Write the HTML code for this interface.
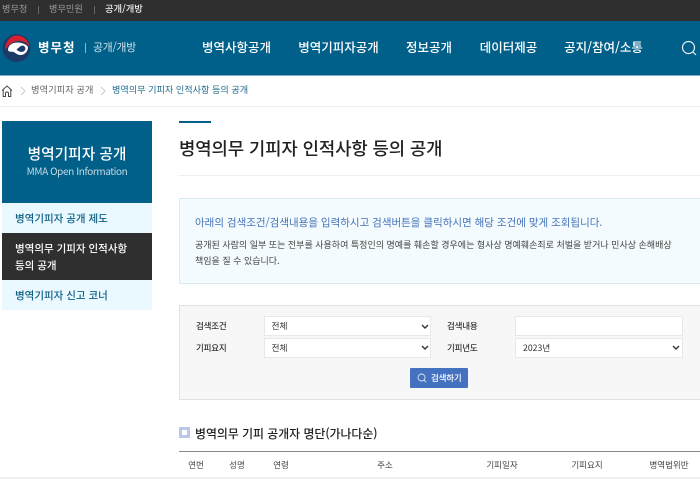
<!DOCTYPE html>
<html lang="ko">
<head>
<meta charset="utf-8">
<title>병역의무 기피자 인적사항 등의 공개</title>
<style>
html,body{margin:0;padding:0;background:#fff}
body{width:700px;height:479px;position:relative;overflow:hidden;font-family:"Noto Sans CJK KR","Liberation Sans",sans-serif;color:#333}
.a{position:absolute;white-space:nowrap;line-height:1}
.b{position:absolute}
.nav{color:#fff;font-size:12.5px;font-weight:500;top:41px;transform:translateX(-50%)}
.sel{position:absolute;background:#fff;border:1px solid #e8e8e8;box-sizing:border-box;height:20px}
.lbl{font-size:8.5px;font-weight:500;color:#333;letter-spacing:-.2px}
.val{font-size:8.7px;color:#333}
.th{font-size:8.5px;color:#444;top:461px;transform:translateX(-50%)}
</style>
</head>
<body>
<div class="b" style="left:0;top:0;width:700px;height:21px;background:#2f2f2f"></div>
<div class="a" style="left:2px;top:4px;font-size:9.2px;color:#999">병무청</div>
<div class="b" style="left:38px;top:6px;width:1px;height:8px;background:#666"></div>
<div class="a" style="left:49px;top:4px;font-size:9.2px;color:#999">병무민원</div>
<div class="b" style="left:94px;top:6px;width:1px;height:8px;background:#666"></div>
<div class="a" style="left:105px;top:4px;font-size:9.3px;font-weight:500;color:#eee">공개/개방</div>

<div class="b" style="left:0;top:21px;width:700px;height:54px;background:#006089;border-bottom:1px solid #7fafc4"></div>
<svg class="b" style="left:0;top:30px" width="36" height="36" viewBox="0 0 36 36">
<circle cx="16.500" cy="18" r="14" fill="#1b3a68"/>
<path d="M5.500 20C4.500 12 10.500 5.500 17 5.500 23.500 5.500 29 10.500 29.500 17 27.500 12.500 23 11 18.500 11 13 11 8 14.500 5.500 20Z" fill="#d5202f"/>
<path d="M8 20C8 15 13 12 18.500 12.500 23.500 13 27 15 28 17 28 22 24 25.500 19.500 25 16 24.500 15 22 12.500 21.800 10.500 21.600 8.500 22 8 20Z" fill="#fff"/>
<path d="M19 17.500C20.500 15.500 23 15 24.500 16.500 26 18 25.500 20.500 23.500 21.500 21.500 22.500 18.500 21.500 17 20 16 19 17.500 19 19 17.500Z" fill="#1b3a68"/>
</svg>
<div class="a" style="left:38px;top:41px;font-size:12.500px;font-weight:700;color:#fff;letter-spacing:1px">병무청</div>
<div class="b" style="left:85px;top:43px;width:1px;height:10px;background:#8fb8ca"></div>
<div class="a" style="left:93px;top:42px;font-size:10.800px;color:#cfe2ea;letter-spacing:-.2px">공개/개방</div>
<div class="a nav" style="left:236.500px">병역사항공개</div>
<div class="a nav" style="left:338.500px">병역기피자공개</div>
<div class="a nav" style="left:429px">정보공개</div>
<div class="a nav" style="left:508.500px">데이터제공</div>
<div class="a nav" style="left:603.500px">공지/참여/소통</div>
<svg class="b" style="left:681px;top:40px" width="16" height="16" viewBox="0 0 16 16" fill="none" stroke="#e6f0f4" stroke-width="1.200"><circle cx="7.500" cy="7.500" r="6"/><path d="M12 12l3 3"/></svg>

<svg class="b" style="left:1px;top:84px" width="12" height="14" viewBox="0 0 12 14" fill="none" stroke="#444" stroke-width="1"><path d="M1 6.500L6 2l5 4.500M2.200 5.500V12.500H4.500V9.500A1.500 1.500 0 0 1 7.500 9.500V12.500H9.800V5.500"/></svg>
<svg class="b" style="left:20px;top:86px" width="6" height="10" viewBox="0 0 6 10" fill="none" stroke="#ccc"><path d="M1 1l4 4-4 4"/></svg>
<div class="a" style="left:31px;top:85px;font-size:9.300px;color:#666">병역기피자 공개</div>
<svg class="b" style="left:100px;top:86px" width="6" height="10" viewBox="0 0 6 10" fill="none" stroke="#ccc"><path d="M1 1l4 4-4 4"/></svg>
<div class="a" style="left:112px;top:85px;font-size:9.150px;color:#1d6a8c">병역의무 기피자 인적사항 등의 공개</div>
<div class="b" style="left:0;top:106px;width:700px;height:1px;background:#eee"></div>

<div class="b" style="left:2px;top:121px;width:150px;height:82px;background:#006089"></div>
<div class="a" style="left:77px;top:147px;font-size:14.700px;font-weight:500;color:#fff;transform:translateX(-50%)">병역기피자 공개</div>
<div class="a" style="left:77px;top:166px;font-size:10px;color:#c5dbe5;letter-spacing:-.4px;transform:translateX(-50%)">MMA Open Information</div>
<div class="b" style="left:2px;top:203px;width:150px;height:30px;background:#eaf8ff"></div>
<div class="a" style="left:15px;top:213.500px;font-size:10.500px;font-weight:500;color:#0e6085">병역기피자 공개 제도</div>
<div class="b" style="left:2px;top:233px;width:150px;height:47px;background:#2f2f2f"></div>
<div class="a" style="left:15px;top:244px;font-size:10.500px;font-weight:500;color:#fff">병역의무 기피자 인적사항</div>
<div class="a" style="left:15px;top:261px;font-size:10.500px;font-weight:500;color:#fff">등의 공개</div>
<div class="b" style="left:2px;top:280px;width:150px;height:30px;background:#eaf8ff"></div>
<div class="a" style="left:15px;top:291px;font-size:10.500px;font-weight:500;color:#0e6085">병역기피자 신고 코너</div>

<div class="b" style="left:179px;top:121px;width:32px;height:2px;background:#006089"></div>
<div class="a" style="left:179px;top:140px;font-size:17.800px;font-weight:500;color:#222;letter-spacing:-.1px">병역의무 기피자 인적사항 등의 공개</div>
<div class="b" style="left:179px;top:175px;width:521px;height:1px;background:#eee"></div>

<div class="b" style="left:179px;top:198px;width:525px;height:86px;box-sizing:border-box;background:#f3fbfe;border:1px solid #d9ecef"></div>
<div class="a" style="left:195px;top:217.500px;font-size:10.500px;color:#4472b8">아래의 검색조건/검색내용을 입력하시고 검색버튼을 클릭하시면 해당 조건에 맞게 조회됩니다.</div>
<div class="a" style="left:195px;top:240px;font-size:9px;color:#444">공개된 사람의 일부 또는 전부를 사용하여 특정인의 명예를 훼손할 경우에는 형사상 명예훼손죄로 처벌을 받거나 민사상 손해배상</div>
<div class="a" style="left:195px;top:256px;font-size:9px;color:#444">책임을 질 수 있습니다.</div>

<div class="b" style="left:179px;top:305px;width:525px;height:95px;box-sizing:border-box;background:#f7f7f7;border:1px solid #e2e2e2"></div>
<div class="a lbl" style="left:196px;top:322px">검색조건</div>
<div class="a lbl" style="left:196px;top:344px">기피요지</div>
<div class="a lbl" style="left:447px;top:322px">검색내용</div>
<div class="a lbl" style="left:447px;top:344px">기피년도</div>
<div class="sel" style="left:264px;top:316px;width:167px"></div>
<div class="sel" style="left:264px;top:338px;width:167px"></div>
<div class="sel" style="left:515px;top:316px;width:168px"></div>
<div class="sel" style="left:515px;top:338px;width:168px"></div>
<div class="a val" style="left:271.500px;top:322px">전체</div>
<div class="a val" style="left:271.500px;top:344px">전체</div>
<div class="a val" style="left:523px;top:344px">2023년</div>
<svg class="b" style="left:421px;top:324px" width="8" height="5" viewBox="0 0 8 5" fill="none" stroke="#333" stroke-width="1.400"><path d="M1 1l3 3 3-3"/></svg>
<svg class="b" style="left:421px;top:345px" width="8" height="5" viewBox="0 0 8 5" fill="none" stroke="#333" stroke-width="1.400"><path d="M1 1l3 3 3-3"/></svg>
<svg class="b" style="left:672px;top:345px" width="8" height="5" viewBox="0 0 8 5" fill="none" stroke="#333" stroke-width="1.400"><path d="M1 1l3 3 3-3"/></svg>
<div class="b" style="left:410px;top:368px;width:58px;height:20px;background:#4472c0;border-radius:1px"></div>
<svg class="b" style="left:417px;top:373px" width="10" height="10" viewBox="0 0 10 10" fill="none" stroke="#dce6f5" stroke-width=".9"><circle cx="4.500" cy="4.500" r="3.500"/><path d="M7 7l2.200 2.200"/></svg>
<div class="a" style="left:431px;top:373.500px;font-size:8.500px;font-weight:500;color:#fff;letter-spacing:-.2px">검색하기</div>

<div class="b" style="left:179px;top:427px;width:11px;height:11px;background:#b9c8ea"></div>
<div class="b" style="left:182px;top:430px;width:5px;height:5px;background:#fff"></div>
<div class="a" style="left:195px;top:427.500px;font-size:11.900px;font-weight:500;color:#222">병역의무 기피 공개자 명단(가나다순)</div>

<div class="b" style="left:179px;top:451px;width:521px;height:1px;background:#888"></div>
<div class="a th" style="left:196px">연번</div>
<div class="a th" style="left:237px">성명</div>
<div class="a th" style="left:281px">연령</div>
<div class="a th" style="left:385px">주소</div>
<div class="a th" style="left:502px">기피일자</div>
<div class="a th" style="left:587px">기피요지</div>
<div class="a th" style="left:669px">병역법위반</div>
<div class="b" style="left:0;top:477px;width:700px;height:2px;background:#f0f0f0"></div>
</body>
</html>
